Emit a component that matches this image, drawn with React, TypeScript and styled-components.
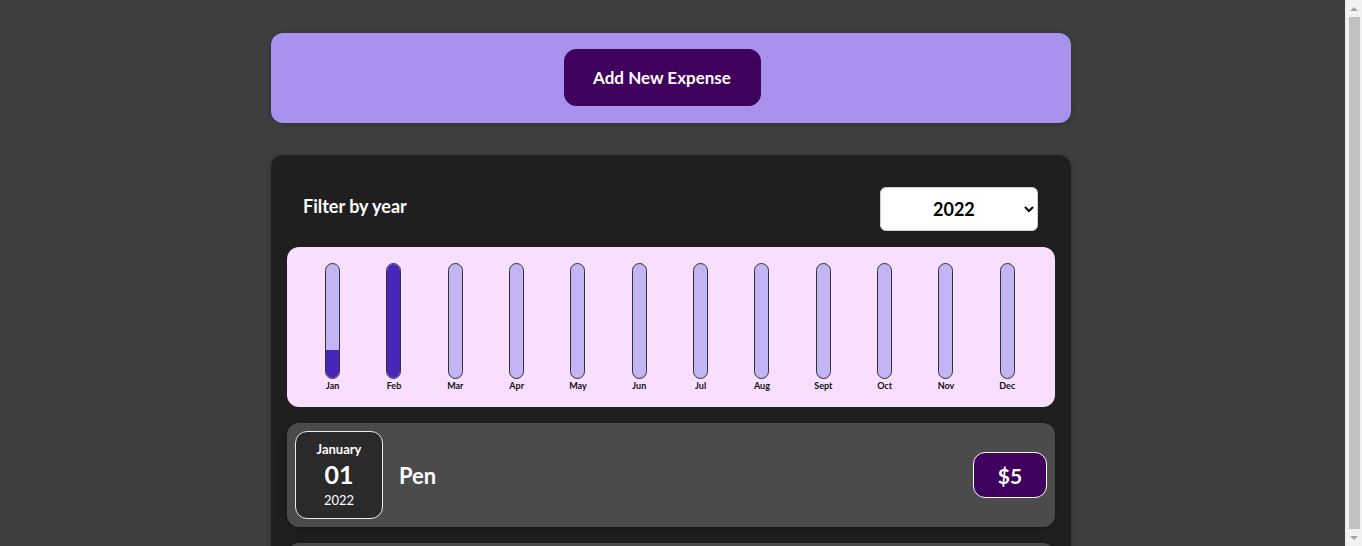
import React from 'react';
import styled, { createGlobalStyle } from 'styled-components';

const GlobalStyle = createGlobalStyle`
  * {
    box-sizing: border-box;
  }

  html {
    font-family: 'Lato', 'Noto Sans', sans-serif;
  }

  body {
    margin: 0;
    padding-right: 20px;
    background-color: #3f3f3f;
  }
`;

const months = ['Jan', 'Feb', 'Mar', 'Apr', 'May', 'Jun', 'Jul', 'Aug', 'Sept', 'Oct', 'Nov', 'Dec'];

const expenses = [
  { id: 'e1', title: 'Pen', amount: 5, month: 'January', day: '01', year: 2022 },
  { id: 'e2', title: 'Notebook', amount: 20, month: 'February', day: '14', year: 2022 },
];

const monthValues = [5, 20, 0, 0, 0, 0, 0, 0, 0, 0, 0, 0];

export default function App() {
  const max = Math.max(...monthValues);

  return (
    <>
      <GlobalStyle />
      <NewExpense>
        <AddButton type="button">Add New Expense</AddButton>
      </NewExpense>
      <ExpensesCard>
        <Filter>
          <FilterLabel>Filter by year</FilterLabel>
          <YearSelect defaultValue="2022">
            <option value="2023">2023</option>
            <option value="2022">2022</option>
            <option value="2021">2021</option>
            <option value="2020">2020</option>
          </YearSelect>
        </Filter>

        <Chart>
          {months.map((label, i) => (
            <ChartBar key={label}>
              <BarInner>
                <BarFill style={{ height: `${Math.round((monthValues[i] / max) * 100)}%` }} />
              </BarInner>
              <BarLabel>{label}</BarLabel>
            </ChartBar>
          ))}
        </Chart>

        <ExpensesList>
          {expenses.map((item) => (
            <ExpenseItem key={item.id}>
              <DateBox>
                <DateMonth>{item.month}</DateMonth>
                <DateDay>{item.day}</DateDay>
                <DateYear>{item.year}</DateYear>
              </DateBox>
              <Description>
                <Title>{item.title}</Title>
                <Price>${item.amount}</Price>
              </Description>
            </ExpenseItem>
          ))}
        </ExpensesList>
      </ExpensesCard>

      <ScrollTrack aria-hidden>
        <ScrollArrow $dir="up" />
        <ScrollThumb />
        <ScrollArrow $dir="down" />
      </ScrollTrack>
    </>
  );
}

const NewExpense = styled.div`
  background-color: #a892ee;
  padding: 16px 16px 17px;
  margin: 33px auto 32px;
  width: 800px;
  border-radius: 12px;
  text-align: center;
  box-shadow: 0 1px 8px rgba(0, 0, 0, 0.25);
`;

const AddButton = styled.button`
  font: inherit;
  font-size: 17px;
  font-weight: bold;
  line-height: 23px;
  white-space: nowrap;
  cursor: pointer;
  padding: 16px 0;
  width: 197px;
  margin-right: 18px;
  border: 1px solid #40005d;
  background-color: #40005d;
  color: white;
  border-radius: 12px;
`;

const ExpensesCard = styled.div`
  padding: 16px;
  background-color: #1f1f1f;
  margin: 0 auto 32px;
  width: 800px;
  border-radius: 12px;
  box-shadow: 0 1px 8px rgba(0, 0, 0, 0.25);
`;

const Filter = styled.div`
  color: white;
  padding: 0 16px;
  margin: 16px 0;
  display: flex;
  align-items: center;
  justify-content: space-between;
`;

const FilterLabel = styled.label`
  font-weight: bold;
  font-size: 18px;
  margin-bottom: 6px;
`;

const YearSelect = styled.select`
  font: inherit;
  font-size: 18px;
  font-weight: bold;
  width: 158px;
  height: 44px;
  padding: 8px 40px 8px 48px;
  border-radius: 6px;
  border: 1px solid #cfcfcf;
  background: white;
  color: black;
  margin-right: 1px;
`;

const Chart = styled.div`
  padding: 16px 17px 16px 15px;
  border-radius: 12px;
  background-color: #f8dfff;
  display: flex;
  justify-content: space-around;
  height: 160px;
`;

const ChartBar = styled.div`
  height: 100%;
  width: 20px;
  display: flex;
  flex-direction: column;
  align-items: center;
`;

const BarInner = styled.div`
  flex: 1;
  width: 15px;
  border: 1px solid #313131;
  border-radius: 12px;
  background-color: #c3b4f3;
  overflow: hidden;
  display: flex;
  flex-direction: column;
  justify-content: flex-end;
`;

const BarFill = styled.div`
  background-color: #4826b9;
  width: 100%;
`;

const BarLabel = styled.div`
  font-weight: bold;
  font-size: 9px;
  line-height: 10px;
  color: #111;
  text-align: center;
  margin-top: 2px;
`;

const ExpensesList = styled.ul`
  list-style: none;
  padding: 0;
  margin: 16px 0 0;
`;

const ExpenseItem = styled.li`
  display: flex;
  align-items: center;
  padding: 8px;
  margin-bottom: 16px;
  border-radius: 12px;
  background-color: #4b4b4b;
  box-shadow: 0 2px 8px rgba(0, 0, 0, 0.25);
`;

const DateBox = styled.div`
  display: flex;
  flex-direction: column;
  width: 88px;
  height: 88px;
  border: 1px solid #ececec;
  background-color: #2a2a2a;
  color: white;
  border-radius: 12px;
  align-items: center;
  justify-content: center;
`;

const DateMonth = styled.div`
  font-size: 13px;
  font-weight: bold;
  line-height: 18px;
`;

const DateDay = styled.div`
  font-size: 25px;
  font-weight: bold;
  line-height: 33px;
`;

const DateYear = styled.div`
  font-size: 13px;
  line-height: 19px;
`;

const Description = styled.div`
  display: flex;
  align-items: center;
  flex: 1;
`;

const Title = styled.h2`
  color: white;
  font-size: 22px;
  flex: 1;
  margin: 0 16px;
`;

const Price = styled.div`
  font-size: 21px;
  font-weight: bold;
  color: white;
  background-color: #40005d;
  border: 1px solid white;
  border-radius: 12px;
  width: 74px;
  height: 46px;
  display: flex;
  align-items: center;
  justify-content: center;
`;

/* stand-in for the browser's vertical scrollbar seen in the screenshot */
const ScrollTrack = styled.div`
  position: fixed;
  top: 0;
  right: 0;
  width: 17px;
  height: 100vh;
  background-color: #f1f1f1;
  border-left: 1px solid #e8e8e8;
  display: flex;
  flex-direction: column;
  align-items: center;
`;

const ScrollArrow = styled.div<{ $dir: 'up' | 'down' }>`
  height: 17px;
  width: 100%;
  display: flex;
  align-items: center;
  justify-content: center;

  &::before {
    content: '';
    border-left: 4px solid transparent;
    border-right: 4px solid transparent;
    ${(p) => (p.$dir === 'up' ? 'border-bottom: 4px solid #a3a3a3;' : 'border-top: 4px solid #a3a3a3;')}
  }
`;

const ScrollThumb = styled.div`
  flex: 1;
  width: 11px;
  margin: 0 0 0 1px;
  background-color: #c1c1c1;
`;
